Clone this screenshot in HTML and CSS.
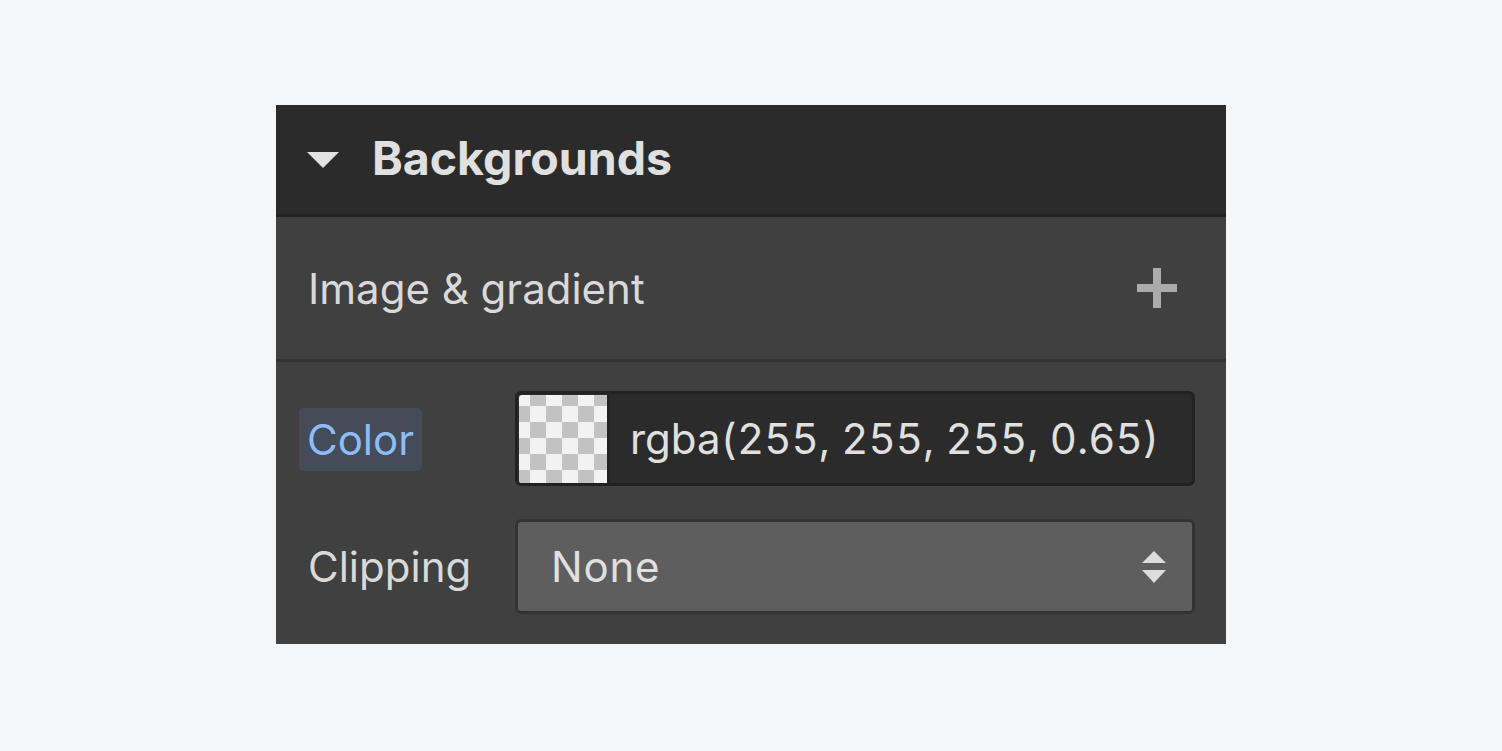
FILE: index.html
```html
<!DOCTYPE html>
<html>
<head>
<meta charset="utf-8">
<link rel="stylesheet" href="styles.css">
</head>
<body>
<div class="panel">
  <div class="header">
    <svg class="caret" width="32" height="16" viewBox="0 0 32 16"><path d="M0 0 H32 L16 16 Z" fill="#e2e2e2"/></svg>
    <span class="title">Backgrounds</span>
  </div>
  <div class="layers">
    <span class="layers-label">Image &amp; gradient</span>
    <svg class="plus" width="40" height="40" viewBox="0 0 40 40"><rect x="16" y="0" width="8" height="40" fill="#ababab"/><rect x="0" y="16" width="40" height="8" fill="#ababab"/></svg>
  </div>
  <div class="props">
    <div class="label-cell"><span class="badge">Color</span></div>
    <div class="color-input">
      <div class="swatch"></div>
      <span class="color-value">rgba(255, 255, 255, 0.65)</span>
    </div>
    <div class="label-cell"><span class="plain">Clipping</span></div>
    <div class="select">
      <span class="select-value">None</span>
      <svg class="updown" width="24" height="32" viewBox="0 0 24 32"><path d="M12 0 L24 12 H0 Z" fill="#dcdcdc"/><path d="M0 19 H24 L12 32 Z" fill="#dcdcdc"/></svg>
    </div>
  </div>
</div>
</body>
</html>
```

FILE: styles.css
```css
html, body {
  margin: 0;
  padding: 0;
  background: #f5f6f8;
}
body {
  width: 1502px;
  height: 751px;
  font-family: Inter, "Noto Sans", sans-serif;
}
.panel {
  position: relative;
  margin: 105px 0 0 276px;
  width: 950px;
  height: 539px;
  background: #404040;
  display: flex;
  flex-direction: column;
}
.header {
  height: 109px;
  background: #2b2b2b;
  border-bottom: 3px solid #222222;
  display: flex;
  align-items: center;
  padding-left: 31px;
  box-sizing: content-box;
}
.caret {
  margin-top: 0;
  margin-right: 33px;
}
.title {
  color: #e0e0e0;
  font-weight: 700;
  font-size: 46.5px;
  margin-top: -4px;
}
.layers {
  height: 142px;
  border-bottom: 3px solid #333333;
  display: flex;
  align-items: center;
  justify-content: space-between;
  padding: 0 49px 0 32px;
}
.layers-label {
  color: #d9d9d9;
  font-size: 42px;
}
.plus {
  display: block;
}
.props {
  display: grid;
  grid-template-columns: 216px 680px;
  grid-auto-rows: 95px;
  row-gap: 33px;
  padding: 29px 0 0 23px;
}
.label-cell {
  display: flex;
  align-items: center;
}
.badge {
  background: #444c59;
  color: #8dbcf6;
  font-size: 42px;
  border-radius: 5px;
  height: 63px;
  line-height: 63px;
  padding: 0 8px;
  margin-top: 1px;
}
.plain {
  color: #d9d9d9;
  font-size: 42px;
  padding-left: 9px;
}
.color-input {
  background: #2b2b2b;
  border: 3px solid #222222;
  border-radius: 6px;
  display: flex;
  align-items: center;
  box-sizing: border-box;
  padding: 0;
}
.swatch {
  width: 88px;
  height: 88px;
  margin-left: 1px;
  border-radius: 3px 0 0 3px;
  background-color: #f2f2f2;
  background-image:
    linear-gradient(45deg, #c2c2c2 25%, transparent 25%, transparent 75%, #c2c2c2 75%),
    linear-gradient(45deg, #c2c2c2 25%, transparent 25%, transparent 75%, #c2c2c2 75%);
  background-size: 32px 32px;
  background-position: -5px -5px, 11px 11px;
  border-right: 3px solid #222222;
}
.color-value {
  color: #e0e0e0;
  font-size: 42px;
  margin-left: 20px;
  font-variant-numeric: tabular-nums;
}
.select {
  background: #5e5e5e;
  border: 3px solid #333333;
  border-radius: 6px;
  box-sizing: border-box;
  display: flex;
  align-items: center;
  justify-content: space-between;
  padding: 0 26px 0 33px;
}
.select-value {
  color: #e0e0e0;
  font-size: 42px;
  letter-spacing: 0.8px;
}
.updown {
  display: block;
}
```
